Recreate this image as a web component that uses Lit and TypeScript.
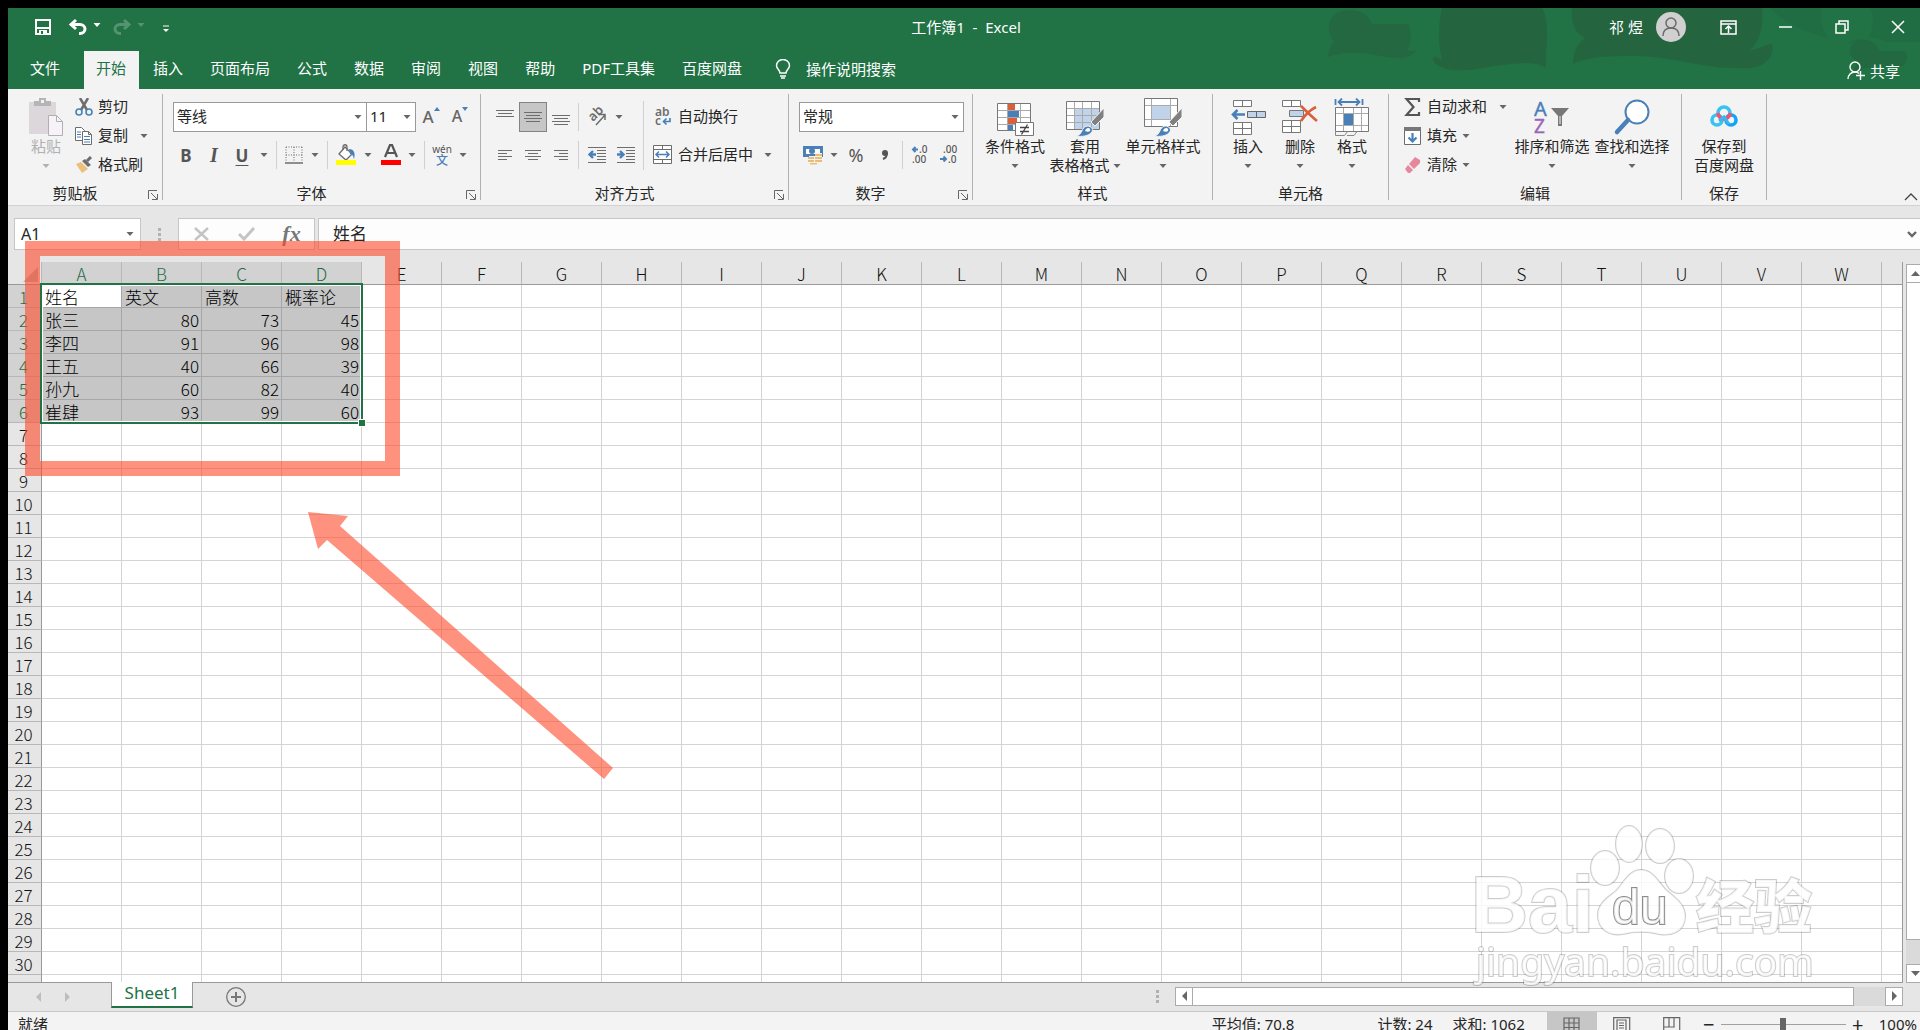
import { LitElement, html, svg, css, nothing, TemplateResult } from "lit";
import { customElement, state } from "lit/decorators.js";
import { classMap } from "lit/directives/class-map.js";

const TABS = ["文件", "开始", "插入", "页面布局", "公式", "数据", "审阅", "视图", "帮助", "PDF工具集", "百度网盘"];
const COLUMNS = "ABCDEFGHIJKLMNOPQRSTUVWX".split("");
const ROW_COUNT = 31;
const DATA: (string | number)[][] = [
  ["姓名", "英文", "高数", "概率论"],
  ["张三", 80, 73, 45],
  ["李四", 91, 96, 98],
  ["王五", 40, 66, 39],
  ["孙九", 60, 82, 40],
  ["崔肆", 93, 99, 60],
];

const icon = (w: number, h: number, body: unknown) =>
  html`<svg width=${w} height=${h} viewBox="0 0 ${w} ${h}" fill="none" aria-hidden="true">${body}</svg>`;

const caret = html`<svg class="caret" width="8" height="4" viewBox="0 0 8 4" aria-hidden="true"><path d="M0.5 0h7L4 4z" fill="currentColor"/></svg>`;

const G = "#6d6d6d";
const B = "#4a80b8";
const L = "#c0d3ea";

const ICONS = {
  save: icon(18, 18, svg`<path d="M2 2h14v14H2z" stroke="#fff" stroke-width="2"/><path d="M2 10h14" stroke="#fff" stroke-width="2"/><path d="M5 12h8v4H5z" fill="#fff"/><path d="M7 13h2v3H7z" fill="#217346"/>`),
  undo: icon(20, 18, svg`<path d="M8 2L3 6.500l5 4.500M3.500 6.500H12a5 4.500 0 0 1 0 9h-1" stroke="currentColor" stroke-width="3"/>`),
  redo: icon(20, 18, svg`<path d="M12 2l5 4.500-5 4.500M16.500 6.500H8a5 4.500 0 0 0 0 9h1" stroke="currentColor" stroke-width="3"/>`),
  customize: icon(6, 8, svg`<path d="M0 1h6" stroke="#fff"/><path d="M0 4h6L3 7z" fill="#fff"/>`),
  bulb: icon(16, 20, svg`<path d="M5 14c0-3-3.500-4-3.500-7.500a6.500 6 0 0 1 13 0C14.500 10 11 11 11 14zM5 17h6M6 19h4" stroke="#fff" stroke-width="1.500"/>`),
  ribbon: icon(17, 15, svg`<path d="M1 1h15v13H1zM1 4h15M8.500 13V6M5.500 9l3-3 3 3" stroke="#fff" stroke-width="1.500"/>`),
  min: icon(14, 14, svg`<path d="M0 7h13" stroke="#fff" stroke-width="1.500"/>`),
  restore: icon(14, 14, svg`<path d="M1 4h9v9H1zM4 4V1h9v9h-3" stroke="#fff" stroke-width="1.500"/>`),
  close: icon(14, 14, svg`<path d="M1 1l12 12M13 1L1 13" stroke="#fff" stroke-width="1.500"/>`),
  avatar: icon(30, 30, svg`<circle cx="15" cy="15" r="15" fill="#d0d0d0"/><circle cx="15" cy="11" r="5" stroke="#6b6b6b" stroke-width="1.500"/><path d="M7 24c0-5 3-8 8-8s8 3 8 8" stroke="#6b6b6b" stroke-width="1.500"/>`),
  share: icon(19, 20, svg`<circle cx="8" cy="6" r="5" stroke="#fff" stroke-width="1.400"/><path d="M1 18c0-4 3-7 7-7 2 0 3 .5 4 1.500M13.500 10v9M9 14.500h9" stroke="#fff" stroke-width="1.400"/>`),
  paste: icon(36, 40, svg`<path d="M1 5h27v32H1z" fill="#dbd7da"/><path d="M6 9V4h5V1h7v3h5v5z" fill="#b5b5b5"/><path d="M13 3h3v3h-3z" fill="#f3f3f3"/><path d="M20.500 18.500h8l6 6v14h-14z" fill="#f7f2f7" stroke="#b3aeb2"/><path d="M28.500 18.500v6h6" stroke="#b3aeb2"/>`),
  cut: icon(18, 18, svg`<path d="M5 0l7 12M13 0L6 12" stroke="${G}" stroke-width="2.500"/><circle cx="4" cy="14" r="3" stroke="${B}" stroke-width="1.600"/><circle cx="14" cy="14" r="3" stroke="${B}" stroke-width="1.600"/>`),
  copy: icon(18, 18, svg`<path d="M.5.5h6l3 3v10h-9z" fill="#fff" stroke="${G}"/><path d="M2 5h4M2 7.500h4M2 10h4" stroke="${B}"/><path d="M7.500 4.500h6l3 3v10h-9z" fill="#fff" stroke="${G}"/><path d="M13.500 4.500v3h3" stroke="${G}"/><path d="M9 9.500h6M9 12.500h6M9 15h6" stroke="${B}"/>`),
  brush: icon(18, 18, svg`<path d="M1 8l5-2 7 7-6 4z" fill="#ebc07c"/><path d="M7 5l3-2 6 6-3 2z" fill="${G}"/><path d="M12 5l4-4" stroke="${G}" stroke-width="3"/>`),
  dots: icon(3, 13, svg`<path d="M0 0h3v3H0zM0 5h3v3H0zM0 10h3v3H0z" fill="#b1b1b1"/>`),
  borders: icon(18, 18, svg`<path d="M1 1h16M1 9h16M1 1v15M9 1v15M17 1v15" stroke="${G}" stroke-dasharray="1 1.500"/><path d="M0 17h18" stroke="${G}" stroke-width="1.500"/>`),
  fill: icon(22, 22, svg`<path d="M10 3l7 7-6 6-7-6z" fill="#fff" stroke="${G}" stroke-width="1.300"/><path d="M8 6V3c0-3 4-3 4 0v4" stroke="${G}" stroke-width="1.300"/><path d="M14 5c4 0 7 3 5 10-1-4-2-5-4-5z" fill="${B}"/><path d="M1 16h20v5H1z" fill="#ff0"/>`),
  fontColor: icon(20, 22, svg`<path d="M4 13l5-12h2l5 12M6 9h8" stroke="#555" stroke-width="2.200"/><path d="M0 16h20v5H0z" fill="#f00"/>`),
  alignTop: icon(18, 20, svg`<path d="M0 3.500h18M2 6.500h14M0 9.500h18" stroke="${G}" />`),
  alignMid: icon(18, 20, svg`<path d="M0 5.500h18M2 8.500h14M0 11.500h18M2 14.500h14" stroke="${G}"/>`),
  alignBot: icon(18, 20, svg`<path d="M0 8.500h18M2 11.500h14M0 14.500h18M2 17.500h14" stroke="${G}"/>`),
  left: icon(16, 12, svg`<path d="M1 1.500h14M1 4.500h9M1 7.500h14M1 10.500h9" stroke="${G}"/>`),
  center: icon(16, 12, svg`<path d="M0 1.500h16M3 4.500h10M0 7.500h16M3 10.500h10" stroke="${G}"/>`),
  right: icon(16, 12, svg`<path d="M1 1.500h14M6 4.500h9M1 7.500h14M6 10.500h9" stroke="${G}"/>`),
  outdent: icon(18, 18, svg`<path d="M0 1.500h18M9 4.500h9M9 7.500h9M9 10.500h9M9 13.500h9M0 16.500h18" stroke="${G}"/><path d="M8 8.500H2M5 5L1.500 8.500 5 12" stroke="${B}" stroke-width="2.400"/>`),
  indent: icon(18, 18, svg`<path d="M0 1.500h18M9 4.500h9M9 7.500h9M9 10.500h9M9 13.500h9M0 16.500h18" stroke="${G}"/><path d="M0 8.500h6M3 5l3.500 3.500L3 12" stroke="${B}" stroke-width="2.400"/>`),
  rotate: icon(20, 20, svg`<text x="0" y="0" transform="translate(6 15) rotate(-45)" font-size="13" font-weight="600" fill="${G}">ab</text><path d="M9 18L18 8M12.500 7.500H18V13" stroke="${G}" stroke-width="1.500"/>`),
  wrap: icon(20, 20, svg`<text x="2" y="9" font-size="12" font-weight="600" fill="${G}">ab</text><text x="2" y="18" font-size="12" font-weight="600" fill="${G}">c</text><path d="M17 11v3.500h-6M13.500 11.500l-3 3 3 3" stroke="${B}" stroke-width="1.700"/>`),
  merge: icon(20, 20, svg`<path d="M.5.500h18v18H.500zM.500 4.500h18M.500 14.500h18M9.500.500v4M9.500 14.500v4" fill="#fff" stroke="${G}"/><path d="M3 9.500h13M6 6.500l-3 3 3 3M13 6.500l3 3-3 3" stroke="${B}" stroke-width="1.500"/>`),
  money: icon(20, 20, svg`<path d="M1.500 2.500h17v8h-17z" fill="#fff" stroke="${B}" stroke-width="3"/><circle cx="9" cy="6" r="3" fill="${B}"/><path d="M12 8h7v11h-8v-1H6v-7h6z" fill="#f3f3f3"/><path d="M12 9h7v2h-7zM12 12h7v2h-7zM12 15h7v2h-7zM5 12h6v2H5zM5 15h6v2H5zM7 18h7v1.500H7z" fill="#e9bd78"/>`),
  comma: icon(8, 12, svg`<circle cx="4" cy="4" r="3" fill="#555"/><path d="M6 4c0 3-1 5-4 6" stroke="#555" stroke-width="2"/>`),
  incDec: icon(18, 20, svg`<path d="M7 4.500H2M4.500 2L2 4.500 4.500 7" stroke="${B}" stroke-width="2"/><text x="8" y="8" font-size="10" fill="#555" font-weight="500">.0</text><text x="1" y="18" font-size="10" fill="#555" font-weight="500">.00</text>`),
  decDec: icon(18, 20, svg`<path d="M0 14h6M3.500 11.500L6 14l-2.500 2.500" stroke="${B}" stroke-width="2"/><text x="3" y="8" font-size="10" fill="#555" font-weight="500">.00</text><text x="8" y="18" font-size="10" fill="#555" font-weight="500">.0</text>`),
  conditional: icon(38, 38, svg`<path d="M1.500 5.500h33v27h-33z" fill="#fff"/><path d="M12 6h7v7h-7zM12 20h9v6h-9z" fill="#d8613c"/><path d="M12 13h11v6H12zM12 27h5v5h-5z" fill="${B}"/><path d="M1.500 12.500h33M1.500 19.500h33M1.500 26.500h33M11.500 5.500v27M24.500 5.500v27" stroke="#aaa"/><path d="M1.500 5.500h33v27h-33z" stroke="#777"/><path d="M19.500 24.500h18v13h-18z" fill="#fff" stroke="#777"/><path d="M24 29.500h9M24 33.500h9M31.500 26.500l-6 10" stroke="#444" stroke-width="1.300"/>`),
  tableFormat: icon(38, 40, svg`<path d="M.5 4.500h33v28H.500z" fill="#fff"/><path d="M9 11h24v21H9z" fill="${L}"/><path d="M.5 11.500h33M.5 18.500h33M.5 25.500h33M8.500 4.500v28M16.500 4.500v28M25.500 4.500v28" stroke="#aaa"/><path d="M.5 4.500h33v28H.500z" stroke="#777"/><path d="M38 11v9L29 29l-4-4z" fill="#808080" stroke="#f3f3f3"/><path d="M10 39c7-1 5-9 11-10 5 0 7 4 4 7-3 3-9 4-15 3z" fill="${B}" stroke="#f3f3f3"/><path d="M20 32c2-2 5-1 4 2-1 1-3 1-5 0z" fill="#fff"/>`),
  cellStyle: icon(38, 40, svg`<path d="M.5 1.500h33v28H.500z" fill="#fff"/><path d="M8 9h18v13H8z" fill="${L}"/><path d="M.5 8.500h33M.5 22.500h33M7.500 1.500v28M26.500 1.500v28" stroke="#aaa"/><path d="M.5 1.500h33v28H.500z" stroke="#777"/><path d="M38 11v9L29 29l-4-4z" fill="#808080" stroke="#f3f3f3"/><path d="M10 39c7-1 5-9 11-10 5 0 7 4 4 7-3 3-9 4-15 3z" fill="${B}" stroke="#f3f3f3"/><path d="M20 32c2-2 5-1 4 2-1 1-3 1-5 0z" fill="#fff"/>`),
  insert: icon(36, 38, svg`<path d="M3.500 2.500h18v6h-18zM12.500 2.500v6M3.500 24.500h18v12h-18zM3.500 30.500h18M12.500 24.500v12" fill="#fff" stroke="#777"/><path d="M17.500 13.500h18v6h-18zM26.500 13.500v6" fill="${L}" stroke="#666"/><path d="M15 16.500H3M7.500 12L3 16.500 7.500 21" stroke="${B}" stroke-width="2.600"/>`),
  remove: icon(36, 38, svg`<path d="M.5 2.500h18v6H.500zM9.500 2.500v6M.5 22.500h18v12H.500zM.5 28.500h18M9.500 22.500v12" fill="#fff" stroke="#777"/><path d="M7.500 12.500h14v6h-14z" fill="${L}" stroke="#777"/><path d="M19 8c5 5 10 10 16 15M34 9c-6 3-11 8-15 14" stroke="#d8613c" stroke-width="2.600"/>`),
  format: icon(36, 38, svg`<path d="M1.500 1v6M28.500 1v6M4 4h22M8 .5L4.500 4 8 7.500M22 .5L25.500 4 22 7.500" stroke="${B}" stroke-width="1.800"/><path d="M1.500 9.500h33v24h-33z" fill="#fff"/><path d="M1.500 15.500h33M1.500 27.500h33M9.500 9.500v24M19.500 9.500v24M27.500 9.500v24" stroke="#aaa"/><path d="M1.500 9.500h33v24h-33z" stroke="#777"/><path d="M10 16h9v11h-9z" fill="${B}"/><path d="M1.500 34v3.500h9l3-4M13 37.500h7l3-4" stroke="#888"/>`),
  sum: icon(18, 18, svg`<path d="M15 4V1H2.500l7 8-7 8H15v-3" stroke="#555" stroke-width="2.200"/>`),
  fillDown: icon(18, 18, svg`<path d="M.5 1.500h16v16H.500z" fill="#fff" stroke="${G}"/><path d="M0 0h17v4H0z" fill="#777"/><path d="M8.500 6v8M4.500 10.500l4 4 4-4" stroke="${B}" stroke-width="2.200"/>`),
  eraser: icon(18, 18, svg`<path d="M11 1l5 3v3l-6 6-5-5z" fill="#e7879b"/><path d="M4 9l5 5-3 3H4l-3-4z" fill="#e7879b"/>`),
  sort: icon(36, 36, svg`<text x="0" y="17" font-size="20" fill="${B}" stroke="${B}" stroke-width=".4">A</text><text x="0" y="34" font-size="19" fill="#9a66b8" stroke="#9a66b8" stroke-width=".4">Z</text><path d="M17 9h18l-7 8v10h-4V17z" fill="#777"/><path d="M26 17v8" stroke="#f3f3f3"/>`),
  find: icon(38, 38, svg`<circle cx="24" cy="14" r="11.500" fill="#fff" stroke="${B}" stroke-width="2"/><path d="M15 22L4 34" stroke="${B}" stroke-width="4.500" stroke-linecap="round"/>`),
  netdisk: icon(28, 24, svg`<circle cx="7" cy="15" r="5" stroke="#38c3f2" stroke-width="3.600"/><circle cx="21" cy="15" r="5" stroke="#12a4f7" stroke-width="3.600"/><path d="M8 8a6 6 0 0 1 12 0" stroke="#38c3f2" stroke-width="3.600"/><path d="M20 8a6 6 0 0 1-12 0" stroke="#f4536f" stroke-width="3.600"/><path d="M9 16l5-4 5 7" stroke="#38b8f5" stroke-width="3"/>`),
  launcher: icon(10, 10, svg`<path d="M.5 9V.500H9M3 3l6 6M9.500 4v5.500H4" stroke="#666"/>`),
  collapse: icon(14, 8, svg`<path d="M1 7l6-6 6 6" stroke="#444" stroke-width="1.300"/>`),
  expand: icon(10, 7, svg`<path d="M1 1l4 4 4-4" stroke="#666" stroke-width="2.400"/>`),
  cancel: icon(16, 14, svg`<path d="M1 1l13 12M14 1L1 13" stroke="#c4c4c4" stroke-width="2.400"/>`),
  accept: icon(18, 14, svg`<path d="M1 7l5 5L16 1" stroke="#c4c4c4" stroke-width="3"/>`),
  plus: icon(20, 20, svg`<circle cx="10" cy="10" r="9.300" stroke="#777" stroke-width="1.300"/><path d="M5 10h10M10 5v10" stroke="#777" stroke-width="2"/>`),
  triLeft: icon(5, 10, svg`<path d="M5 0v10L0 5z" fill="currentColor"/>`),
  triRight: icon(5, 10, svg`<path d="M0 0v10l5-5z" fill="currentColor"/>`),
  triUp: icon(9, 5, svg`<path d="M0 5h9L4.500 0z" fill="currentColor"/>`),
  triDown: icon(9, 5, svg`<path d="M0 0h9L4.500 5z" fill="currentColor"/>`),
  viewNormal: icon(18, 16, svg`<path d="M1 1h15v14H1zM1 6h15M1 10.500h15M6 1v14M11 1v14" stroke="#666" stroke-width="1.200"/>`),
  viewPage: icon(18, 16, svg`<path d="M.7.700h16v15h-16zM4 15V3h9v12M6 6h5M6 8.500h5M6 11h5" stroke="#666" stroke-width="1.200"/>`),
  viewBreak: icon(18, 16, svg`<path d="M.7 15V.700h16V15M6 .7v9M11 .7v9M.7 10h11" stroke="#666" stroke-width="1.200"/>`),
};

@customElement("app-root")
export class AppRoot extends LitElement {
  @state() private activeTab = "开始";

  static styles = css`
    :host {
      display: block;
      height: 100vh;
      overflow: hidden;
      position: relative;
      background: #000;
      font: 15px/19px "Noto Sans", "Noto Sans CJK SC", sans-serif;
      color: #262626;
    }
    * { box-sizing: border-box; }
    svg { display: block; flex: none; }
    button, input, select { font: inherit; color: inherit; margin: 0; }
    button {
      border: 0;
      padding: 0;
      background: none;
      display: flex;
      align-items: center;
      justify-content: center;
      white-space: nowrap;
    }
    /* The window runs a little past the bottom edge of the screen. */
    .window {
      height: calc(100vh + 10px);
      padding: 8px 0 0 8px;
      display: flex;
      flex-direction: column;
    }
    .banner { position: relative; background: #217346; color: #fff; flex: none; }
    .art { position: absolute; right: 0; top: 0; }
    .title { position: relative; height: 43px; display: grid; grid-template-columns: 1fr auto 1fr; align-items: center; padding-bottom: 5px; }
    .title-text { white-space: pre; padding-left: 4px; }
    .quick { display: flex; align-items: center; padding-left: 26px; }
    .quick .save { width: 18px; margin-right: 16px; }
    .quick .arrow { width: 20px; }
    .quick .drop { width: 20px; height: 18px; padding-bottom: 4px; margin-right: 4px; }
    .quick .more { width: 12px; margin-left: 4px; padding-top: 4px; }
    .quick .dim { color: #559372; }
    .account { display: flex; align-items: center; justify-content: flex-end; padding-right: 15px; }
    .user { display: flex; gap: 13px; margin-right: 34px; white-space: nowrap; }
    .sys { display: flex; gap: 42px; }
    .tabs { position: relative; height: 38px; display: flex; gap: 2px; align-items: stretch; }
    .tab { padding: 0 13px 3px 12px; }
    .tab:first-child { padding: 0 22px 3px; }
    .tab.active { background: #f3f3f3; color: #217346; }
    .tell { gap: 15px; padding: 0 18px 2px; }
    .share { margin-left: auto; gap: 4px; padding-right: 20px; padding-top: 2px; }

    .ribbon { flex: none; height: 117px; display: flex; background: #f3f3f3; border-bottom: 1px solid #d2d2d2; }
    .divider { width: 1px; margin: 5px 0; background: #b1b1b1; flex: none; }
    .group { display: grid; grid-template-rows: 94px 20px; flex: none; }
    .group-body { display: flex; align-items: flex-start; }
    .group-foot { display: flex; align-items: center; }
    .group-name { flex: 1; text-align: center; }
    .launcher { width: 20px; height: 20px; padding: 4px 0 0 2px; }
    .clipboard { width: 154px; }
    .font { width: 317px; }
    .align { width: 307px; }
    .number { width: 183px; }
    .styles { width: 239px; }
    .cells { width: 175px; }
    .editing { width: 292px; }
    .storage { width: 84px; }
    .clipboard .group-body { padding-left: 14px; }
    .font .group-body, .align .group-body, .number .group-body { padding-left: 10px; }
    .styles .group-body { padding-left: 8px; }
    .cells .group-body { padding-left: 9px; }
    .editing .group-body { padding: 0 9px 0 15px; }
    .editing .small-list { margin-right: auto; }
    .collapse { margin: auto 2px 4px auto; }

    .big { flex-direction: column; justify-content: flex-start; padding-top: 8px; }
    .big .pic { height: 40px; display: flex; align-items: center; }
    .big .line { display: flex; align-items: center; justify-content: center; gap: 3px; height: 19px; }
    .w48 { width: 48px; }
    .w52 { width: 52px; }
    .w68 { width: 68px; }
    .w72 { width: 72px; }
    .w80 { width: 80px; }
    .w84 { width: 84px; }
    .disabled { color: #b1b1b1; }
    .caret { color: #666; }
    .disabled .caret, .dim .caret { color: inherit; }
    .quick .caret { color: inherit; }
    .small-list { padding-top: 3px; display: flex; flex-direction: column; align-items: flex-start; }
    .clipboard .small-list { padding-left: 5px; }
    .small { height: 29px; gap: 5px; }
    .small.wide .caret { margin-left: 7px; }
    .rows { padding-top: 13px; display: flex; flex-direction: column; align-items: flex-start; gap: 8px; }
    .row { display: flex; align-items: center; height: 30px; }
    .rule { width: 1px; height: 28px; margin: 0 3px; background: #d0d0d0; flex: none; }
    .rule.tall { height: 69px; margin-top: 12px; }
    .tool { width: 28px; height: 30px; }
    .tool.t30 { width: 30px; }
    .tool.pressed { background: #c6c6c6; border: 1px solid #838383; }
    .drop { width: 16px; height: 30px; padding-right: 2px; }
    .glyph { font-size: 17px; font-weight: 700; color: #555; padding-right: 2px; }
    .italic { font-family: "Liberation Serif", serif; font-style: italic; font-size: 20px; }
    .underline { text-decoration: underline; text-underline-offset: 3px; text-decoration-thickness: 1px; }
    .percent { font-size: 18px; color: #555; padding-right: 2px; }
    .grow { font-size: 17px; color: #666; align-items: flex-start; font-weight: 500; padding-top: 5px; }
    .grow.shrink { font-size: 16px; }
    .grow svg { color: #4a80b8; }
    .pinyin { flex-direction: column; font-size: 10px; line-height: 10px; color: #555; }
    .pinyin .hanzi { color: #4a80b8; font-size: 12px; line-height: 13px; font-weight: 500; }
    .labelled { gap: 5px; height: 30px; padding-left: 6px; }
    .labelled span { padding-bottom: 2px; }
    .labelled .caret { margin-left: 6px; }
    .combo { display: grid; height: 30px; }
    .combo select, .combo input { grid-area: 1 / 1; appearance: none; width: 100%; border: 1px solid #999; border-radius: 0; background: #fff; padding: 0 3px 2px; outline: 0; }
    .combo .caret { grid-area: 1 / 1; justify-self: end; align-self: center; margin-right: 5px; pointer-events: none; }
    .combo.face { width: 194px; }
    .combo.size { width: 50px; margin-left: -1px; }
    .combo.format { width: 165px; }

    .formula { flex: none; height: 56px; padding: 12px 0 12px 6px; display: flex; background: #e6e6e6; }
    .combo.name-box { width: 127px; height: 32px; }
    .combo.name-box input { border-color: #c6c6c6; padding: 0 6px; font-size: 16px; }
    .combo.name-box .caret { margin-right: 7px; }
    .grip { width: 37px; display: flex; align-items: center; justify-content: center; }
    .actions { width: 137px; height: 32px; border: 1px solid #c6c6c6; background: #fdfdfd; display: flex; align-items: center; }
    .actions button { flex: 1; }
    .fx { font: italic 700 22px/22px "Liberation Serif", serif; color: #777; }
    .entry { flex: 1; min-width: 0; margin-left: 3px; height: 32px; display: flex; border: 1px solid #c6c6c6; border-right: 0; background: #fdfdfd; padding-right: 3px; }
    .entry input { flex: 1; min-width: 0; border: 0; outline: 0; background: none; padding: 0 14px 2px; font-size: 17px; }

    .sheet { flex: 1; min-height: 0; display: flex; background: #e6e6e6; }
    .viewport { flex: 1; min-width: 0; overflow: hidden; position: relative; border-right: 1px solid #999; border-bottom: 1px solid #999; }
    table { table-layout: fixed; width: 1954px; border-collapse: separate; border-spacing: 0; font: 300 17px/20px "Noto Sans CJK SC", sans-serif; color: #000; }
    .c-head { width: 34px; }
    th { font-weight: 300; padding: 2px 0 0; height: 23px; background: #e6e6e6; text-align: center; color: #111; border-right: 1px solid #b8b8b8; border-bottom: 1px solid #999; }
    tbody th { border-right-color: #999; border-bottom-color: #b8b8b8; padding-right: 2px; }
    th.on { background: #d2d2d2; color: #1e6b43; }
    .corner svg { margin-left: auto; margin-right: 3px; }
    td { height: 23px; padding: 2px 2px 0 3px; background: #fff; border-right: 1px solid #d4d4d4; border-bottom: 1px solid #d4d4d4; white-space: nowrap; overflow: hidden; }
    td.on { background: #c6c6c6; border-color: #a6a6a6; }
    td.cursor { background: #fff; }
    td.num { text-align: right; }
    .selection { position: absolute; left: 32px; top: 21px; width: 323px; height: 141px; border: 2px solid #217346; box-shadow: inset 0 0 0 1px #fff; pointer-events: none; }
    .handle { position: absolute; right: -4px; bottom: -4px; width: 6px; height: 6px; background: #217346; outline: 1px solid #fff; }
    .vscroll { width: 17px; padding: 2px 0 0 3px; overflow: hidden; display: flex; flex-direction: column; flex: none; }
    .vscroll > * { width: 18px; }
    .arrow-btn { width: 18px; height: 19px; background: #fff; border: 1px solid #ababab; color: #666; flex: none; }
    .v-track { flex: 1; background: #dadada; padding-bottom: 24px; }
    .v-thumb { height: 100%; background: #fff; border: 1px solid #ababab; border-top: 0; }

    .sheets { flex: none; height: 29px; display: flex; align-items: center; background: #e6e6e6; border-bottom: 1px solid #c6c6c6; padding: 0 17px 0 28px; }
    .nav { color: #bdbdbd; gap: 24px; display: flex; width: 75px; }
    .sheet-tab { align-self: flex-start; width: 82px; height: 26px; margin-top: -1px; background: #fff; border: 1px solid #999; border-top: 0; border-bottom: 2px solid #217346; color: #217346; font-size: 17px; padding-bottom: 4px; position: relative; }
    .add { margin-left: 33px; }
    .hscroll { margin-left: auto; display: flex; align-items: center; width: 40%; padding-bottom: 2px; }
    .hscroll .grip { width: auto; margin-right: 16px; }
    .h-track { flex: 1; height: 19px; background: #dadada; padding-right: 31px; }
    .h-thumb { height: 100%; background: #fff; border: 1px solid #ababab; border-left: 0; }

    .status { flex: none; height: 28px; display: flex; align-items: center; background: #f3f3f3; padding: 0 3px 3px 10px; }
    .stats { margin-left: auto; display: flex; gap: 20px; margin-right: 22px; }
    .stats .first { margin-right: 63px; }
    .view { width: 50px; height: 28px; margin-bottom: -3px; padding-bottom: 3px; }
    .view.active { background: #c6c6c6; }
    .zoom { display: flex; align-items: center; gap: 7px; margin-left: 7px; height: 28px; }
    .zoom button { width: 10px; height: 20px; font-size: 20px; }
    .zoom input { appearance: none; width: 125px; height: 20px; background: linear-gradient(#a0a0a0, #a0a0a0) center / 100% 1px no-repeat; }
    .zoom input::-webkit-slider-thumb { appearance: none; width: 6px; height: 14px; background: #666; }
    .percent-text { margin-left: 16px; white-space: nowrap; }

    .mark-box { position: absolute; left: 25px; top: 241px; width: 375px; height: 235px; border: 15px solid rgba(255, 73, 40, 0.6); pointer-events: none; }
    .mark-arrow { position: absolute; left: 300px; top: 505px; pointer-events: none; }
    .watermark { position: absolute; right: 90px; bottom: 30px; pointer-events: none; filter: blur(0.6px); }
    .wm { fill: #fff; fill-opacity: 0.8; stroke: #000; stroke-opacity: 0.2; stroke-width: 2px; paint-order: stroke; }
    .wm-latin { font-family: "Liberation Sans", sans-serif; }
    .wm-inner { stroke-opacity: 0.45; }
    .wm-hanzi { font-family: "Noto Sans CJK SC", sans-serif; font-weight: 900; }
  `;

  private group(cls: string, name: string, body: TemplateResult, launcher = false) {
    return html`
      <section class="group ${cls}" aria-label=${name}>
        <div class="group-body">${body}</div>
        <div class="group-foot">
          <span class="group-name">${name}</span>
          ${launcher ? html`<button class="launcher" aria-label="${name}设置">${ICONS.launcher}</button>` : nothing}
        </div>
      </section>
      <div class="divider"></div>`;
  }

  private big(cls: string, pic: TemplateResult, first: string, second: string, drop = true) {
    return html`<button class="big ${cls}">
      <span class="pic">${pic}</span>
      <span class="line">${first}</span>
      <span class="line">${second}${drop ? caret : nothing}</span>
    </button>`;
  }

  private small(pic: TemplateResult, label: string, drop = false, wide = false) {
    return html`<button class=${classMap({ small: true, wide })}>${pic}<span>${label}</span>${drop ? caret : nothing}</button>`;
  }

  private tool(label: string, content: unknown, cls = "") {
    return html`<button class="tool ${cls}" aria-label=${label}>${content}</button>`;
  }

  private drop(label: string) {
    return html`<button class="drop" aria-label=${label}>${caret}</button>`;
  }

  private renderBanner() {
    return html`
      <header class="banner">
        <svg class="art" width="620" height="81" viewBox="0 0 620 81" aria-hidden="true">
          <g fill="#24653f">
            <path opacity=".8" d="M50 2c13 0 20 7 22 14h36c4 6 3 18 0 26 3 2 6 0 8 1-6 8-18 8-30 6-18-4-38-8-58 0 1-8 3-12 6-15-10-14-6-32 16-32z"/>
            <path d="M142 0h100c6 10 6 28 4 46v14c-10-8-34-4-52-2-20 4-46 8-58-2-4-4-4-8 0-7l6 3c-4-16-4-36 0-52z"/>
            <path d="M272 0h190c2 18-2 34-12 42 8 0 16-6 22-6 4 16-14 26-28 24-40 2-70-12-110-12-24 0-44 0-61 8 0-12 4-20 12-26-12-6-14-18-13-30z"/>
            <path opacity=".7" d="M564 32c8 0 14 6 16 11h24c4 4 4 10 0 15-16 2-34-2-50 6 0-4 2-8 4-10-14-8-8-22 6-22z"/>
            <path opacity=".4" d="M470 0h150v34h-34c-6-4-16-6-26-2-8 6-14 4-22 0-20-4-50-12-68-32z"/>
          </g>
          <path fill="#217346" d="M522 0h48c4 8 4 20-2 32-10-3-18 0-24 6-18-4-26-22-22-38z"/>
        </svg>
        <div class="title">
          <div class="quick">
            <button class="save" aria-label="保存">${ICONS.save}</button>
            <button class="arrow" aria-label="撤消">${ICONS.undo}</button>
            <button class="drop" aria-label="撤消列表">${caret}</button>
            <button class="arrow dim" aria-label="恢复">${ICONS.redo}</button>
            <button class="drop dim" aria-label="恢复列表">${caret}</button>
            <button class="more" aria-label="自定义快速访问工具栏">${ICONS.customize}</button>
          </div>
          <div class="title-text">工作簿1  -  Excel</div>
          <div class="account">
            <button class="user"><span>祁 煜</span>${ICONS.avatar}</button>
            <div class="sys">
              <button aria-label="功能区显示选项">${ICONS.ribbon}</button>
              <button aria-label="最小化">${ICONS.min}</button>
              <button aria-label="向下还原">${ICONS.restore}</button>
              <button aria-label="关闭">${ICONS.close}</button>
            </div>
          </div>
        </div>
        <nav class="tabs">
          ${TABS.map(
            (t) => html`<button class=${classMap({ tab: true, active: t === this.activeTab })} @click=${() => (this.activeTab = t)}>${t}</button>`
          )}
          <button class="tell">${ICONS.bulb}<span>操作说明搜索</span></button>
          <button class="share">${ICONS.share}<span>共享</span></button>
        </nav>
      </header>`;
  }

  private renderRibbon() {
    return html`<div class="ribbon">
      ${this.group("clipboard", "剪贴板", html`
        ${this.big("w48 disabled", ICONS.paste, "粘贴", "")}
        <div class="small-list">
          ${this.small(ICONS.cut, "剪切")} ${this.small(ICONS.copy, "复制", true, true)} ${this.small(ICONS.brush, "格式刷")}
        </div>`, true)}
      ${this.group("font", "字体", html`
        <div class="rows">
          <div class="row">
            <span class="combo face"><select aria-label="字体"><option>等线</option></select>${caret}</span>
            <span class="combo size"><select aria-label="字号"><option>11</option></select>${caret}</span>
            ${this.tool("增大字号", html`A${icon(6, 4, svg`<path d="M0 4h6L3 0z" fill="currentColor"/>`)}`, "t30 grow")}
            ${this.tool("减小字号", html`A${icon(6, 4, svg`<path d="M0 0h6L3 4z" fill="currentColor"/>`)}`, "grow shrink")}
          </div>
          <div class="row">
            ${this.tool("加粗", "B", "glyph")} ${this.tool("倾斜", "I", "glyph italic")} ${this.tool("下划线", "U", "glyph underline")}
            ${this.drop("下划线样式")}
            <span class="rule"></span>${this.tool("边框", ICONS.borders)}${this.drop("边框样式")}
            <span class="rule"></span>${this.tool("填充颜色", ICONS.fill, "t30")}${this.drop("填充颜色列表")}
            ${this.tool("字体颜色", ICONS.fontColor)}${this.drop("字体颜色列表")}
            <span class="rule"></span>${this.tool("拼音", html`<span>wén</span><span class="hanzi">文</span>`, "pinyin")}${this.drop("拼音选项")}
          </div>
        </div>`, true)}
      ${this.group("align", "对齐方式", html`
        <div class="rows">
          <div class="row">
            ${this.tool("顶端对齐", ICONS.alignTop)}${this.tool("垂直居中", ICONS.alignMid, "pressed")}${this.tool("底端对齐", ICONS.alignBot)}
            <span class="rule"></span>${this.tool("方向", ICONS.rotate, "t30")}${this.drop("方向列表")}
          </div>
          <div class="row">
            ${this.tool("左对齐", ICONS.left)}${this.tool("居中", ICONS.center)}${this.tool("右对齐", ICONS.right)}
            <span class="rule"></span>${this.tool("减少缩进量", ICONS.outdent, "t30")}${this.tool("增加缩进量", ICONS.indent)}
          </div>
        </div>
        <span class="rule tall"></span>
        <div class="rows">
          <button class="labelled">${ICONS.wrap}<span>自动换行</span></button>
          <button class="labelled">${ICONS.merge}<span>合并后居中</span>${caret}</button>
        </div>`, true)}
      ${this.group("number", "数字", html`
        <div class="rows">
          <span class="combo format"><select aria-label="数字格式"><option>常规</option></select>${caret}</span>
          <div class="row">
            ${this.tool("会计数字格式", ICONS.money)}${this.drop("会计格式列表")}
            ${this.tool("百分比样式", "%", "percent")}${this.tool("千位分隔样式", ICONS.comma)}
            <span class="rule"></span>${this.tool("增加小数位数", ICONS.incDec)}${this.tool("减少小数位数", ICONS.decDec, "t30")}
          </div>
        </div>`, true)}
      ${this.group("styles", "样式", html`
        ${this.big("w68", ICONS.conditional, "条件格式", "")}
        ${this.big("w72", ICONS.tableFormat, "套用", "表格格式")}
        ${this.big("w84", ICONS.cellStyle, "单元格样式", "")}`)}
      ${this.group("cells", "单元格", html`
        ${this.big("w52", ICONS.insert, "插入", "")}
        ${this.big("w52", ICONS.remove, "删除", "")}
        ${this.big("w52", ICONS.format, "格式", "")}`)}
      ${this.group("editing", "编辑", html`
        <div class="small-list">
          ${this.small(ICONS.sum, "自动求和", true, true)} ${this.small(ICONS.fillDown, "填充", true)} ${this.small(ICONS.eraser, "清除", true)}
        </div>
        ${this.big("w80", ICONS.sort, "排序和筛选", "")}
        ${this.big("w80", ICONS.find, "查找和选择", "")}`)}
      ${this.group("storage", "保存", this.big("w84", ICONS.netdisk, "保存到", "百度网盘", false))}
      <button class="collapse" aria-label="折叠功能区">${ICONS.collapse}</button>
    </div>`;
  }

  private renderFormulaBar() {
    return html`<div class="formula">
      <span class="combo name-box"><input aria-label="名称框" value="A1" />${caret}</span>
      <span class="grip">${ICONS.dots}</span>
      <div class="actions">
        <button aria-label="取消">${ICONS.cancel}</button>
        <button aria-label="输入">${ICONS.accept}</button>
        <button class="fx" aria-label="插入函数">fx</button>
      </div>
      <div class="entry">
        <input aria-label="编辑栏" value="姓名" />
        <button aria-label="展开编辑栏">${ICONS.expand}</button>
      </div>
    </div>`;
  }

  private renderCell(r: number, c: number) {
    const value = DATA[r]?.[c];
    const on = value !== undefined;
    return html`<td class=${classMap({ on, cursor: r === 0 && c === 0, num: typeof value === "number" })}>${value ?? nothing}</td>`;
  }

  private renderSheet() {
    return html`<main class="sheet">
      <div class="viewport">
        <table>
          <colgroup><col class="c-head" />${COLUMNS.map(() => html`<col />`)}</colgroup>
          <thead>
            <tr>
              <th class="corner">${icon(15, 15, svg`<path d="M15 0v15H0z" fill="#b4b4b4"/>`)}</th>
              ${COLUMNS.map((c, i) => html`<th scope="col" class=${classMap({ on: i < 4 })}>${c}</th>`)}
            </tr>
          </thead>
          <tbody>
            ${Array.from({ length: ROW_COUNT }, (_, r) => html`<tr>
              <th scope="row" class=${classMap({ on: r < DATA.length })}>${r + 1}</th>
              ${COLUMNS.map((_c, c) => this.renderCell(r, c))}
            </tr>`)}
          </tbody>
        </table>
        <div class="selection"><span class="handle"></span></div>
      </div>
      <div class="vscroll">
        <button class="arrow-btn" aria-label="向上滚动">${ICONS.triUp}</button>
        <div class="v-track"><div class="v-thumb"></div></div>
        <button class="arrow-btn" aria-label="向下滚动">${ICONS.triDown}</button>
      </div>
    </main>`;
  }

  private renderFooter() {
    return html`
      <div class="sheets">
        <div class="nav">
          <button aria-label="上一个工作表">${ICONS.triLeft}</button>
          <button aria-label="下一个工作表">${ICONS.triRight}</button>
        </div>
        <button class="sheet-tab">Sheet1</button>
        <button class="add" aria-label="新工作表">${ICONS.plus}</button>
        <div class="hscroll">
          <span class="grip">${ICONS.dots}</span>
          <button class="arrow-btn" aria-label="向左滚动">${ICONS.triLeft}</button>
          <div class="h-track"><div class="h-thumb"></div></div>
          <button class="arrow-btn" aria-label="向右滚动">${ICONS.triRight}</button>
        </div>
      </div>
      <footer class="status">
        <span>就绪</span>
        <div class="stats"><span class="first">平均值: 70.8</span><span>计数: 24</span><span>求和: 1062</span></div>
        <button class="view active" aria-label="普通">${ICONS.viewNormal}</button>
        <button class="view" aria-label="页面布局">${ICONS.viewPage}</button>
        <button class="view" aria-label="分页预览">${ICONS.viewBreak}</button>
        <div class="zoom">
          <button aria-label="缩小">−</button>
          <input type="range" aria-label="显示比例" min="0" max="200" value="100" />
          <button aria-label="放大">+</button>
        </div>
        <span class="percent-text">100%</span>
      </footer>`;
  }

  private renderMarks() {
    return html`
      <div class="mark-box"></div>
      <svg class="mark-arrow" width="320" height="280" viewBox="0 0 320 280" aria-hidden="true">
        <path d="M8 7l40 4-8 10 273 242-9 11L27 35l-9 9z" fill="rgba(255,73,40,.6)"/>
      </svg>
      <svg class="watermark" width="360" height="180" viewBox="0 0 360 180" aria-hidden="true">
        <ellipse class="wm" cx="135" cy="48" rx="14" ry="17"/>
        <ellipse class="wm" cx="159" cy="24" rx="13" ry="18"/>
        <ellipse class="wm" cx="190" cy="26" rx="14" ry="17"/>
        <ellipse class="wm" cx="209" cy="56" rx="14" ry="17"/>
        <path class="wm" d="M171 50c12 0 17 12 25 20 9 8 19 14 19 26 0 16-14 20-26 18-12-3-24-3-36 0-13 2-25-4-25-19 0-12 10-17 18-24 8-8 13-21 25-21z"/>
        <text class="wm wm-latin" x="1" y="112" font-size="79" font-weight="700">Bai</text>
        <text class="wm wm-latin wm-inner" x="142" y="104" font-size="50">du</text>
        <text class="wm wm-hanzi" x="226" y="108" font-size="58">经验</text>
        <text class="wm" x="6" y="156" font-size="39">jingyan.baidu.com</text>
      </svg>`;
  }

  render() {
    return html`
      <div class="window">
        ${this.renderBanner()} ${this.renderRibbon()} ${this.renderFormulaBar()} ${this.renderSheet()} ${this.renderFooter()}
      </div>
      ${this.renderMarks()}`;
  }
}
